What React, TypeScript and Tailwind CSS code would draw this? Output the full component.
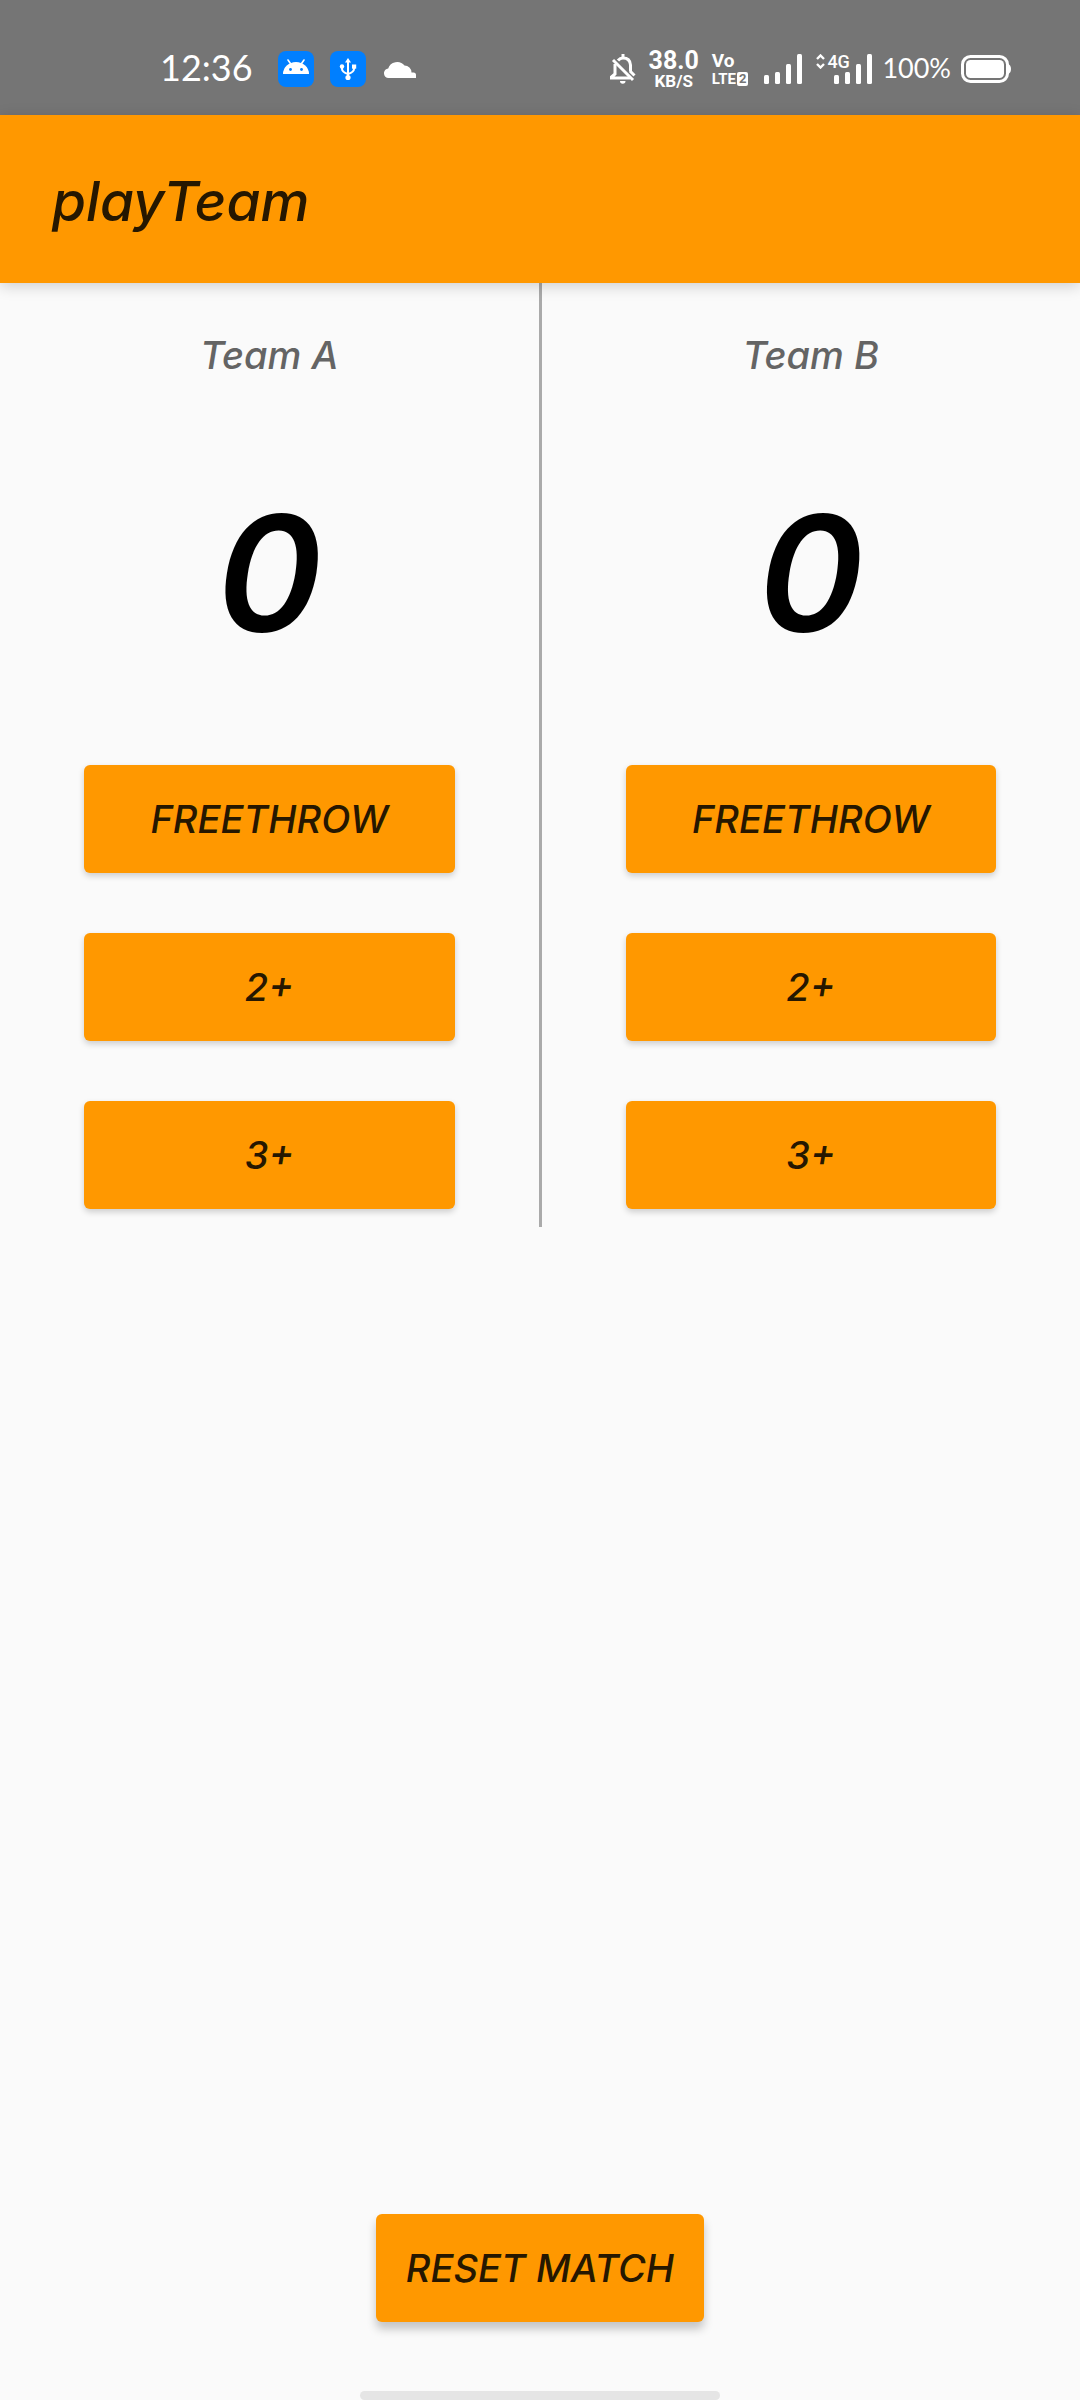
import { useState } from "react";

function AndroidBadge() {
  return (
    <svg width="36" height="36" viewBox="0 0 36 36" aria-hidden="true">
      <rect width="36" height="36" rx="8" fill="#007fff" />
      <path d="M5 23a13 12 0 0 1 26 0z" fill="#fff" />
      <path d="M10 9l3.500 5M26 9l-3.500 5" stroke="#fff" strokeWidth="1.600" strokeLinecap="round" />
      <circle cx="12.500" cy="18.500" r="1.400" fill="#007fff" />
      <circle cx="23.500" cy="18.500" r="1.400" fill="#007fff" />
    </svg>
  );
}

function UsbBadge() {
  return (
    <svg width="36" height="36" viewBox="0 0 36 36" aria-hidden="true">
      <rect width="36" height="36" rx="8" fill="#007fff" />
      <path d="M18 10v16M12 16v2q0 3 6 5q6-2 6-5V16" fill="none" stroke="#fff" strokeWidth="2" />
      <path d="M18 7l3 4.500h-6z" fill="#fff" />
      <circle cx="12" cy="15.500" r="2.200" fill="#fff" />
      <rect x="22" y="13.500" width="4.200" height="4.200" fill="#fff" />
      <circle cx="18" cy="26.500" r="2.600" fill="#fff" />
    </svg>
  );
}

function Cloud() {
  return (
    <svg width="32" height="18" viewBox="0 0 32 18" aria-hidden="true">
      <path
        d="M4.500 18A4.500 4.500 0 0 1 0 13.500V12.500A5 5 0 0 1 4.200 8.500A9.300 9 0 0 1 20.500 5.500A7 7 0 0 1 27.500 12.500H29.500A2.500 2.500 0 0 1 32 15V18z"
        fill="#fff"
      />
    </svg>
  );
}

function BellOff() {
  return (
    <svg width="26" height="32" viewBox="0 0 26 32" fill="none" stroke="#fff" strokeWidth="3" aria-hidden="true">
      <path d="M8 7.500Q10 5 13 5Q20 5 20.500 12v6.500M5 11v10l-3.500 3v1H20" />
      <path d="M20 18l4.500 4.500" />
      <path d="M3 7l20 20" />
      <path d="M13 1v4" />
      <path d="M10 28h5.500a2.750 2.750 0 0 1-5.500 0z" fill="#fff" stroke="none" />
    </svg>
  );
}

function SignalBars() {
  return (
    <svg width="38" height="30" viewBox="0 0 38 30" fill="#fff" aria-hidden="true">
      <rect x="0" y="21" width="5" height="9" rx="1.500" />
      <rect x="11" y="18" width="5" height="12" rx="1.500" />
      <rect x="22" y="10" width="5" height="20" rx="1.500" />
      <rect x="33" y="0" width="5" height="30" rx="1.500" />
    </svg>
  );
}

function DataArrows() {
  return (
    <svg width="9" height="15" viewBox="0 0 9 15" fill="none" stroke="#fff" strokeWidth="2.400" aria-hidden="true">
      <path d="M1 5l3.500-3.500L8 5M1 10l3.500 3.500L8 10" />
    </svg>
  );
}

function Battery() {
  return (
    <svg width="50" height="28" viewBox="0 0 50 28" aria-hidden="true">
      <rect x="1.500" y="1.500" width="45" height="25" rx="8" fill="none" stroke="#fff" strokeWidth="3" />
      <rect x="5" y="5" width="38" height="18" rx="4.500" fill="#fff" />
      <path d="M47 9q3 1 3 5t-3 5z" fill="#fff" />
    </svg>
  );
}

function StatusBar() {
  return (
    <div className="flex h-[115px] items-center justify-between bg-[#757575] pt-[22px] pr-[69px] pl-40 font-['Lato',sans-serif] text-white">
      <div className="flex items-center">
        <span className="w-[118px] pb-1 text-[36px] leading-9">12:36</span>
        <div className="flex items-center gap-4">
          <AndroidBadge />
          <UsbBadge />
          <div className="pl-0.5">
            <Cloud />
          </div>
        </div>
      </div>
      <div className="flex items-center">
        <BellOff />
        <div className="ml-3 w-[52px] text-center font-['Roboto',sans-serif] font-bold">
          <div className="text-[25px] leading-6">38.0</div>
          <div className="text-[17px] leading-4">KB/S</div>
        </div>
        <div className="ml-3 font-['Liberation_Sans_Narrow','Roboto',sans-serif] font-bold">
          <div className="text-[19px] leading-5">Vo</div>
          <div className="flex items-center">
            <span className="text-[15px] leading-4">LTE</span>
            <span className="ml-px rounded-xs bg-white px-0.5 text-[13px] leading-[14px] text-[#757575]">2</span>
          </div>
        </div>
        <div className="ml-4">
          <SignalBars />
        </div>
        <div className="relative ml-3.5 pl-[18px]">
          <SignalBars />
          <div className="absolute top-0 left-0 flex items-center gap-0.5">
            <DataArrows />
            <span className="font-['Roboto',sans-serif] text-[18px] leading-4 font-medium">4G</span>
          </div>
        </div>
        <span className="ml-2.5 pb-0.5 text-[27px] leading-8">100%</span>
        <div className="ml-2.5">
          <Battery />
        </div>
      </div>
    </div>
  );
}

const buttonStyle =
  "h-[108px] cursor-pointer rounded-md bg-[#ff9800] text-[38px] leading-[48px] font-medium text-[#261700] italic";

function Team({ name }: { name: string }) {
  const [score, setScore] = useState(0);
  const actions = [
    { label: "FREETHROW", points: 1 },
    { label: "2+", points: 2 },
    { label: "3+", points: 3 },
  ];
  return (
    <section className="flex flex-1 flex-col px-[84px] pt-12 pb-[18px] text-center">
      <h2 className="text-[38px] leading-[48px] font-medium text-[#646464] italic">{name}</h2>
      <output className="mt-[114px] mb-28 block text-[160px] leading-[160px] font-semibold text-black italic">
        {score}
      </output>
      <div className="flex flex-col gap-[60px]">
        {actions.map((action) => (
          <button
            key={action.label}
            type="button"
            onClick={() => setScore(score + action.points)}
            className={`${buttonStyle} shadow-[0_3px_6px_rgba(0,0,0,0.18)]`}
          >
            {action.label}
          </button>
        ))}
      </div>
    </section>
  );
}

export default function App() {
  const [match, setMatch] = useState(0);
  return (
    <div className="flex min-h-screen flex-col bg-[#fafafa] font-['Inter',sans-serif]">
      <StatusBar />
      <header className="z-10 flex h-[168px] items-center bg-[#ff9800] px-[52px] pt-1 shadow-[0_3px_14px_rgba(0,0,0,0.18)]">
        <h1 className="text-[55px] leading-[64px] font-medium text-[#261700] italic">playTeam</h1>
      </header>
      <main className="flex flex-1 flex-col">
        <div key={match} className="flex">
          <Team name="Team A" />
          <div className="w-[3px] bg-[#aaaaaa]" />
          <Team name="Team B" />
        </div>
        <div className="mt-auto flex justify-center pb-[69px]">
          <button
            type="button"
            onClick={() => setMatch(match + 1)}
            className={`${buttonStyle} px-[30px] shadow-[0_7px_10px_rgba(0,0,0,0.22)]`}
          >
            RESET MATCH
          </button>
        </div>
      </main>
      <div className="mx-auto h-[9px] w-1/3 rounded-full bg-[#e5e5e5]" />
    </div>
  );
}
